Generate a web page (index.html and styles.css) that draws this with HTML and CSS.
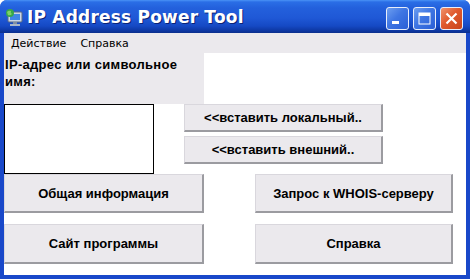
FILE: index.html
```html
<!DOCTYPE html>
<html lang="ru">
<head>
  <meta charset="UTF-8">
  <title>IP Address Power Tool</title>
  <link rel="stylesheet" href="styles.css">
</head>
<body>
  <div class="window">
    <div class="titlebar">
      <svg class="app-icon" width="18" height="18" viewBox="0 0 18 18">
        <rect x="3" y="4" width="14" height="10" rx="1" fill="#c9d6e6" stroke="#5a6b82" stroke-width="1"/>
        <rect x="5" y="6" width="10" height="6" fill="#3f86e6"/>
        <rect x="8" y="14" width="4" height="2" fill="#7d8da3"/>
        <rect x="5" y="16" width="10" height="2" fill="#a9b6c8"/>
        <circle cx="5" cy="5" r="4" fill="#37a84a"/>
        <path d="M2 4 Q4 2 6 3 Q5 5 7 6 Q5 8 3 7 Z" fill="#7fd06a"/>
      </svg>
      <span class="title">IP Address Power Tool</span>
      <div class="caption-buttons">
        <div class="cap-btn">
          <svg width="21" height="21" viewBox="0 0 21 21"><rect x="5" y="13" width="7" height="3" fill="#fff"/></svg>
        </div>
        <div class="cap-btn">
          <svg width="21" height="21" viewBox="0 0 21 21"><rect x="5" y="5" width="11" height="11" fill="none" stroke="#fff" stroke-width="1"/><rect x="5" y="5" width="11" height="3" fill="#fff"/></svg>
        </div>
        <div class="cap-btn close">
          <svg width="21" height="21" viewBox="0 0 21 21"><path d="M5.5 5.5 L15.5 15.5 M15.5 5.5 L5.5 15.5" stroke="#fff" stroke-width="2.2"/></svg>
        </div>
      </div>
    </div>

    <div class="menubar">
      <span>Действие</span>
      <span>Справка</span>
    </div>

    <div class="client">
      <div class="top">
        <div class="label">IP-адрес или символьное имя:</div>
        <div class="input"></div>
        <div class="insert-buttons">
          <div class="btn small">&lt;&lt;вставить локальный..</div>
          <div class="btn small">&lt;&lt;вставить внешний..</div>
        </div>
      </div>

      <div class="actions">
        <div class="btn big">Общая информация</div>
        <div class="btn big">Запрос к WHOIS-серверу</div>
        <div class="btn big tall">Сайт программы</div>
        <div class="btn big tall">Справка</div>
      </div>
    </div>
  </div>
</body>
</html>
```

FILE: styles.css
```css
body {
  margin: 0;
  padding: 0;
  background: #fff;
}

.window {
  width: 470px;
  height: 279px;
  display: flex;
  flex-direction: column;
  background: #1948c9;
  border-radius: 7px 7px 0 0;
  overflow: hidden;
}

/* Title bar */
.titlebar {
  height: 33px;
  display: flex;
  align-items: center;
  padding: 0 4px 0 5px;
  background: linear-gradient(to bottom, #4a93f6 0, #2a6ee6 2px, #2360dc 8px, #1f58d6 18px, #1549c4 26px, #0d36a0 31px, #0b2f8c 33px);
}

.app-icon {
  flex: none;
  margin-top: 1px;
}

.title {
  margin-left: 4px;
  color: #fff;
  font-family: "DejaVu Sans", sans-serif;
  font-weight: bold;
  font-size: 17px;
  letter-spacing: 0.2px;
  text-shadow: 1px 1px 0 #0b2377;
}

.caption-buttons {
  margin-left: auto;
  display: flex;
  gap: 4px;
  margin-top: 4px;
  margin-right: 3px;
}

.cap-btn {
  width: 21px;
  height: 21px;
  border: 1px solid #e8eefa;
  border-radius: 3px;
  background: linear-gradient(135deg, #6d9ef0 0%, #3f76e3 45%, #2b5fd6 100%);
  display: flex;
}

.cap-btn.close {
  background: linear-gradient(135deg, #f0936e 0%, #e05a2e 45%, #c8431b 100%);
}

/* Menu */
.menubar {
  height: 20px;
  margin: 0 4px;
  background: #ebe9ed;
  display: flex;
  align-items: center;
  gap: 14px;
  padding-left: 7px;
  font-family: "DejaVu Sans", sans-serif;
  font-size: 11px;
  color: #000;
}

/* Client area */
.client {
  flex: 1;
  margin: 0 4px 4px;
  background: #fff;
  font-family: "Liberation Sans", sans-serif;
  font-weight: bold;
  font-size: 12px;
  color: #000;
}

.top {
  display: grid;
  grid-template-columns: 150px 30px 20px 179px;
  grid-template-rows: 51px 70px;
}

.label {
  grid-column: 1 / 4;
  background: #ebe9ed;
  padding: 3px 20px 0 1px;
  line-height: 17px;
  font-size: 13px;
  letter-spacing: 0.3px;
}

.input {
  grid-column: 1;
  grid-row: 2;
  border: 1px solid #000;
  background: #fff;
}

.insert-buttons {
  grid-column: 3 / 5;
  grid-row: 2;
  display: flex;
  flex-direction: column;
  gap: 4px;
}

.btn {
  box-sizing: border-box;
  display: flex;
  align-items: center;
  justify-content: center;
  background: #ebe9ed;
  border-top: 1px solid #d9d7dd;
  border-left: 1px solid #d9d7dd;
  border-right: 2px solid #9b9ba0;
  border-bottom: 2px solid #9b9ba0;
  font-size: 13px;
}

.btn.small {
  height: 28px;
}

.actions {
  display: grid;
  grid-template-columns: 200px 198px;
  grid-template-rows: 39px 40px;
  column-gap: 51px;
  row-gap: 11px;
}

.btn.big {
  font-size: 13px;
}
```
